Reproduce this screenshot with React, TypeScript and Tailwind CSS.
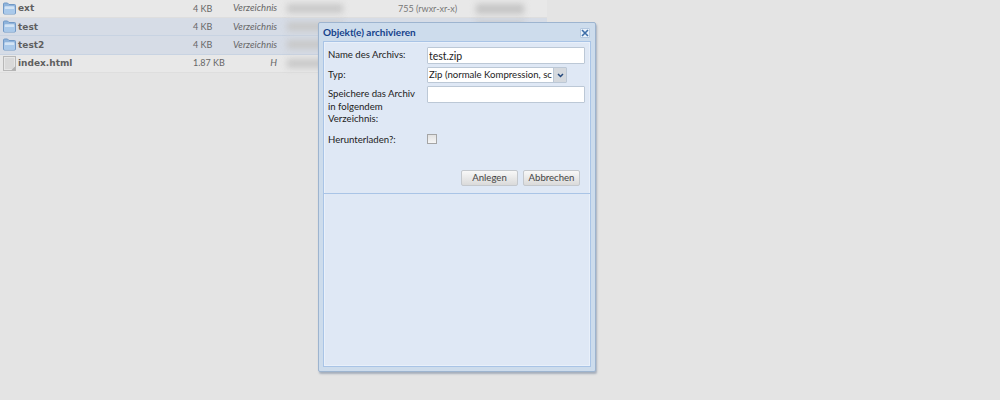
interface FileRow {
  name: string;
  size: string;
  type: string;
  selected?: boolean;
  folder?: boolean;
  perms?: string;
}

const rows: FileRow[] = [
  { name: 'ext', size: '4 KB', type: 'Verzeichnis', folder: true, perms: '755 (rwxr-xr-x)' },
  { name: 'test', size: '4 KB', type: 'Verzeichnis', folder: true, selected: true },
  { name: 'test2', size: '4 KB', type: 'Verzeichnis', folder: true, selected: true },
  { name: 'index.html', size: '1.87 KB', type: 'H' },
];

function FolderIcon() {
  return (
    <svg width="13" height="13" viewBox="0 0 13 13" className="shrink-0">
      <path d="M0.5 11V2Q0.5 1 1.5 1H4.5L6 2.5H11.5Q12.5 2.5 12.5 3.5V11Q12.5 12 11.5 12H1.5Q0.5 12 0.5 11Z" fill="#8fb4dc" stroke="#7199c6" />
      <path d="M1.5 11.5V5Q1.5 4.2 2.5 4.2H10.5Q11.5 4.2 11.5 5V11.5Z" fill="#d3e4f5" />
      <path d="M1.5 11.5V7H11.5V11.5Z" fill="#a9c9ea" />
    </svg>
  );
}

function FileIcon() {
  return (
    <svg width="13" height="15" viewBox="0 0 13 15" className="shrink-0">
      <rect x="0.5" y="0.5" width="12" height="14" fill="#e6e6e6" stroke="#b8b8b8" />
      <rect x="2" y="2" width="9" height="11" fill="#d9d9d9" />
      <path d="M8 14.5L12.5 10V14.5Z" fill="#b0b0b0" />
    </svg>
  );
}

function Row({ row }: { row: FileRow }) {
  return (
    <div className={`flex items-center h-[18.2px] w-[547px] border-b ${row.selected ? 'bg-[#d6dce6] border-[#c8d3e2]' : 'bg-[#e8e8e8] border-[#dedede]'}`}>
      <div className="flex items-center gap-[2px] w-[193px] pl-[3px]">
        {row.folder ? <FolderIcon /> : <FileIcon />}
        <span className="pt-[1px] font-['DejaVu_Sans',sans-serif] text-[9px] font-bold text-[#5f5f5f]">{row.name}</span>
      </div>
      <div className="w-[40px] text-[9px] text-[#666]">{row.size}</div>
      <div className="w-[44px] text-[9.5px] italic text-[#666] text-right">{row.type}</div>
      <div className="ml-[10px] w-[56px] h-[9px] bg-[#c8c8c8] blur-[3px]" />
      <div className="ml-[55px] w-[77px] text-[9px] text-[#777] whitespace-nowrap">{row.perms}</div>
      <div className="ml-[1px] w-[48px] h-[10px] bg-[#c4c4c4] blur-[3px]" />
    </div>
  );
}

function FormRow({ label, children, className = '' }: { label: string; children: React.ReactNode; className?: string }) {
  return (
    <div className={`flex items-start ${className}`}>
      <label className="w-[99px] pr-[8px] text-[9.6px] leading-[12.5px] text-[#222] pt-[2px]">{label}</label>
      {children}
    </div>
  );
}

function Button({ children, className = '' }: { children: React.ReactNode; className?: string }) {
  return (
    <button className={`h-[16px] rounded-[2px] border border-[#c4c8cd] bg-gradient-to-b from-[#f8f8f8] to-[#dadada] text-[9.6px] leading-[14px] text-[#444] ${className}`}>
      {children}
    </button>
  );
}

export default function App() {
  return (
    <div className="relative w-[1000px] h-[400px] overflow-hidden bg-[#e4e4e4] font-['Lato',sans-serif]">
      {rows.map((r) => (
        <Row key={r.name} row={r} />
      ))}

      {/* Dialog */}
      <div className="absolute left-[318px] top-[22px] w-[278px] h-[350px] flex flex-col rounded-[2px] border border-[#9db4cf] bg-[#cddcec] shadow-[1px_2px_2px_rgba(90,110,140,0.45)] px-[4px] pb-[4px]">
        <div className="flex items-center justify-between h-[18px] pr-[1px]">
          <span className="text-[10px] font-bold text-[#15428b]">Objekt(e) archivieren</span>
          <div className="flex items-center justify-center w-[10px] h-[10px] mt-[1px] bg-[#e8f0f9] border border-[#b4c8e0] rounded-[1px]">
            <svg width="8" height="8" viewBox="0 0 8 8">
              <path d="M1 1L7 7M7 1L1 7" stroke="#3d6da8" strokeWidth="1.6" />
            </svg>
          </div>
        </div>

        <div className="flex-1 flex flex-col border border-[#a9c4e6] bg-[#dfe8f5] shadow-[inset_0_0_0_1px_#e9f0fa]">
          <div className="h-[152px] flex flex-col border-b border-[#a9c4e6] px-[4px] pt-[5px]">
            <FormRow label="Name des Archivs:">
              <input readOnly value="test.zip" className="w-[158px] h-[17px] rounded-[1px] border border-[#bcc8d6] bg-white px-[1px] text-[10.5px] text-[#222] outline-none" />
            </FormRow>
            <FormRow label="Typ:" className="mt-[3px]">
              <div className="flex w-[140px] h-[16px] rounded-[1px] border border-[#bcc8d6] bg-white">
                <span className="flex-1 px-[1px] text-[9.6px] leading-[14px] text-[#222] whitespace-nowrap">Zip (normale Kompression, sc</span>
                <div className="w-[13px] shrink-0 flex items-center justify-center bg-[#d5d9de] border-l border-[#bcc8d6]">
                  <svg width="7" height="5" viewBox="0 0 7 5">
                    <path d="M1 1L3.5 3.5L6 1" stroke="#24487c" strokeWidth="1.5" fill="none" />
                  </svg>
                </div>
              </div>
            </FormRow>
            <FormRow label="Speichere das Archiv in folgendem Verzeichnis:" className="mt-[3px]">
              <input readOnly className="w-[158px] h-[17px] rounded-[1px] border border-[#bcc8d6] bg-white outline-none" />
            </FormRow>
            <FormRow label="Herunterladen?:" className="mt-[6px]">
              <div className="w-[10px] h-[10px] mt-[2px] border border-[#a5a5a5] bg-gradient-to-b from-[#e2e2e2] to-[#f6f6f6]" />
            </FormRow>
            <div className="flex justify-end gap-[5px] mt-auto mb-[7px] pr-[6px]">
              <Button className="w-[57px]">Anlegen</Button>
              <Button className="w-[57px]">Abbrechen</Button>
            </div>
          </div>
        </div>
      </div>
    </div>
  );
}
